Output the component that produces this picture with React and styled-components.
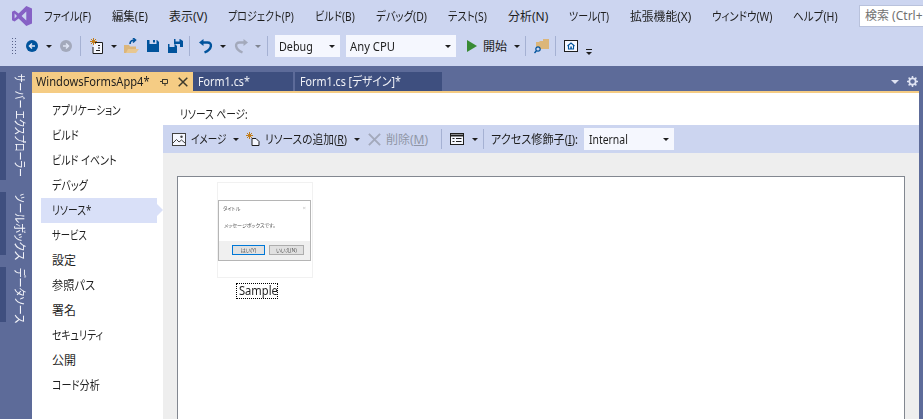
import React, { useLayoutEffect, useRef } from 'react';
import styled, { createGlobalStyle, css } from 'styled-components';

const GlobalStyle = createGlobalStyle`
    html, body {
        margin: 0;
        padding: 0;
        background: #5d6b99;
    }
    * {
        box-sizing: border-box;
    }
`;

const gapLeft = css`
    margin-left: ${(p) => p.$ml || 0}px;
    flex-shrink: 0;
`;

const Window = styled.div`
    width: 923px;
    height: 419px;
    overflow: hidden;
    display: flex;
    flex-direction: column;
    background: #5d6b99;
    color: #1e1e1e;
    font-family: 'Noto Sans', 'Noto Sans CJK JP', sans-serif;
    font-size: 12px;
    font-feature-settings: 'palt';
`;

const FitBox = styled.span`
    ${gapLeft};
    display: inline-block;
    ${(p) => (p.$vertical ? `height: ${p.$w}px;` : `width: ${p.$w}px;`)}
    white-space: nowrap;
    color: ${(p) => (p.$muted ? '#8f95a6' : 'inherit')};
`;

const FitInner = styled.span`
    display: inline-block;
    transform-origin: 0 0;
    u {
        text-underline-offset: 1px;
    }
`;

// Meiryo UI is narrower than the installed fonts, so each label is squeezed to its measured width
const Fit = ({ w, vertical, ml, muted, children }) => {
    const ref = useRef(null);
    useLayoutEffect(() => {
        const el = ref.current;
        if (vertical) {
            el.style.transform = `scaleY(${w / el.offsetHeight})`;
        } else {
            el.style.transform = `scaleX(${w / el.offsetWidth})`;
        }
    }, [w, vertical]);
    return (
        <FitBox $w={w} $vertical={vertical} $ml={ml} $muted={muted}>
            <FitInner ref={ref}>{children}</FitInner>
        </FitBox>
    );
};

const Header = styled.div`
    height: 66px;
    background: #ccd5f0;
    flex-shrink: 0;
`;

const MenuBar = styled.div`
    height: 32px;
    display: flex;
    align-items: center;
    padding-left: 12px;
    overflow: hidden;
`;

const SearchBox = styled.div`
    margin-left: 21px;
    width: 120px;
    height: 22px;
    flex-shrink: 0;
    background: #fff;
    border: 1px solid #b9c2dc;
    color: #717171;
    padding-left: 5px;
    line-height: 19px;
    white-space: nowrap;
`;

const ToolBar = styled.div`
    height: 28px;
    display: flex;
    align-items: center;
    padding-left: 12px;
`;

const Grip = styled.div`
    ${gapLeft};
    width: 5px;
    height: 17px;
    background-image: radial-gradient(circle at 0.5px 0.5px, #59638a 0.7px, transparent 0.8px);
    background-size: 3px 3px;
`;

const Caret = styled.span`
    ${gapLeft};
    width: 0;
    height: 0;
    border-left: 3px solid transparent;
    border-right: 3px solid transparent;
    border-top: 3px solid ${(p) => (p.$muted ? '#7f8490' : '#1e1e1e')};
`;

const Sep = styled.span`
    ${gapLeft};
    width: 1px;
    height: 20px;
    background: #a5b1d3;
`;

const Combo = styled.div`
    ${gapLeft};
    width: ${(p) => p.$w}px;
    height: 22px;
    background: #f5f7fe;
    padding: 0 5px 0 ${(p) => p.$pad || 4}px;
    display: flex;
    align-items: center;
    justify-content: space-between;
`;

const IconSvg = styled.svg`
    ${gapLeft};
    display: block;
`;

const Overflow = styled.span`
    ${gapLeft};
    width: 6px;
    height: 6px;
    margin-top: 11px;
    border-top: 1px solid #1e1e1e;
    position: relative;
    &::after {
        content: '';
        position: absolute;
        left: 0;
        top: 2px;
        border-left: 3px solid transparent;
        border-right: 3px solid transparent;
        border-top: 3px solid #1e1e1e;
    }
`;

const Body = styled.div`
    flex: 1;
    min-height: 0;
    display: flex;
`;

const Rail = styled.div`
    width: 32px;
    flex-shrink: 0;
    padding-top: 6px;
    display: flex;
    flex-direction: column;
`;

const RailTab = styled.div`
    height: ${(p) => p.$h}px;
    margin-bottom: ${(p) => p.$mb || 0}px;
    border-left: 6px solid #3f4f7f;
    width: 32px;
    color: #f4f5fa;
    writing-mode: vertical-rl;
    text-orientation: sideways;
    white-space: nowrap;
    display: flex;
    justify-content: flex-start;
    align-items: center;
    padding-top: ${(p) => p.$pt || 1}px;
    line-height: 26px;
`;

const Main = styled.div`
    flex: 1;
    min-width: 0;
    padding-right: 4px;
    display: flex;
    flex-direction: column;
`;

const TabStrip = styled.div`
    height: 25px;
    flex-shrink: 0;
    padding-top: 6px;
    display: flex;
    align-items: stretch;
`;

const DocTab = styled.div`
    width: ${(p) => p.$w}px;
    margin-right: ${(p) => p.$mr || 0}px;
    padding-left: ${(p) => p.$pad || 4}px;
    background: ${(p) => (p.$active ? '#f5cc84' : '#3e4f7f')};
    color: ${(p) => (p.$active ? '#1e1e1e' : '#f2f3f8')};
    display: flex;
    align-items: center;
    white-space: nowrap;
    line-height: 19px;
`;

const StripTools = styled.div`
    margin-left: auto;
    padding-right: 1px;
    display: flex;
    align-items: center;
`;

const StripCaret = styled.span`
    width: 0;
    height: 0;
    border-left: 4px solid transparent;
    border-right: 4px solid transparent;
    border-top: 4px solid #dfe3f2;
    margin-right: 8px;
`;

const GoldLine = styled.div`
    height: 2px;
    background: #f5cc84;
    flex-shrink: 0;
`;

const Content = styled.div`
    flex: 1;
    min-height: 0;
    display: flex;
    background: #fff;
`;

const Nav = styled.div`
    width: 131px;
    flex-shrink: 0;
    padding: 5px 0 0 9px;
`;

const NavItem = styled.div`
    position: relative;
    width: 116px;
    height: 25px;
    line-height: 25px;
    padding-left: 11px;
    color: #1e1e1e;
    background: ${(p) => (p.$active ? '#d9e0f8' : 'transparent')};
    ${(p) =>
        p.$active &&
        css`
            &::after {
                content: '';
                position: absolute;
                right: -6px;
                top: 6px;
                border-top: 6.5px solid transparent;
                border-bottom: 6.5px solid transparent;
                border-left: 6px solid #d9e0f8;
            }
        `}
`;

const Panel = styled.div`
    flex: 1;
    min-width: 0;
    display: flex;
    flex-direction: column;
`;

const PanelTitle = styled.div`
    height: 32px;
    flex-shrink: 0;
    padding: 13px 0 0 17px;
    line-height: 18px;
`;

const ResourceBar = styled.div`
    height: 28px;
    flex-shrink: 0;
    background: #ccd5f0;
    display: flex;
    align-items: center;
    padding-left: 9px;
`;

const CanvasArea = styled.div`
    flex: 1;
    min-height: 0;
    background: #eeeeee;
    padding: 23px 14px 0;
    display: flex;
`;

const Canvas = styled.div`
    flex: 1;
    background: #fff;
    border: 1px solid #828790;
    border-bottom: 0;
    padding: 5px 0 0 39px;
`;

const Resource = styled.div`
    width: 96px;
    display: flex;
    flex-direction: column;
    align-items: flex-start;
`;

const Thumb = styled.div`
    width: 96px;
    height: 96px;
    border: 1px solid #f1f1f1;
    display: flex;
    align-items: center;
    justify-content: center;
`;

const MiniDialog = styled.div`
    width: 93px;
    height: 61px;
    margin-left: -1px;
    background: #fff;
    border: 1px solid #b5b5b5;
    display: flex;
    flex-direction: column;
    font-size: 5px;
    color: #555;
    filter: blur(0.3px);
`;

const MiniTitle = styled.div`
    height: 14px;
    padding: 0 4px;
    display: flex;
    align-items: center;
    justify-content: space-between;
`;

const MiniClose = styled.span`
    color: #c4c4c4;
    font-size: 6px;
`;

const MiniMessage = styled.div`
    flex: 1;
    padding: 6px 0 0 5px;
`;

const MiniFooter = styled.div`
    height: 19px;
    background: #f0f0f0;
    display: flex;
    align-items: center;
    justify-content: flex-end;
    gap: 4px;
    padding-right: 6px;
`;

const MiniButton = styled.div`
    width: ${(p) => p.$w}px;
    height: 10px;
    line-height: 8px;
    text-align: center;
    background: #e1e1e1;
    border: 1px solid ${(p) => (p.$primary ? '#0078d7' : '#adadad')};
`;

const ResourceLabel = styled.div`
    margin-top: 5px;
    margin-left: 19px;
    height: 16px;
    width: 42px;
    padding-left: 2px;
    line-height: 14px;
    border: 1px dotted #000;
    color: #1e1e1e;
`;

const VsLogo = () => (
    <IconSvg width="20" height="20" viewBox="0 0 20 20">
        <path
            fill="#8661c5"
            fillRule="evenodd"
            d="M14.3 0 20 2.4v15.2L14.3 20 6.6 12.6 2.6 15.6 0 14.3V5.7l2.6-1.3 4 3zM14.3 5.6 9.6 10l4.7 4.4zM2.6 7.6v4.8L5 10z"
        />
    </IconSvg>
);

const CircleArrow = ({ color, flip, ml }) => (
    <IconSvg $ml={ml} width="12" height="12" viewBox="0 0 12 12">
        <circle cx="6" cy="6" r="6" fill={color} />
        <path
            d={flip ? 'M3 6h5M6 3.5 8.5 6 6 8.5' : 'M9 6H4M6 3.5 3.5 6 6 8.5'}
            fill="none"
            stroke="#dfe5f5"
            strokeWidth="1.5"
        />
    </IconSvg>
);

const NewProjectIcon = ({ ml }) => (
    <IconSvg $ml={ml} width="14" height="16" viewBox="0 0 14 16">
        <path d="M5 4.5h7.5v11H3V9" fill="#f5f7fe" stroke="#1e1e1e" />
        <path d="M8 7.5h2M8 10h2M6 12.5h4" stroke="#1e1e1e" />
        <path d="M3.5 0v7M0 3.5h7M1 1l5 5M6 1 1 6" stroke="#c27d1a" />
    </IconSvg>
);

const OpenFolderIcon = ({ ml }) => (
    <IconSvg $ml={ml} width="15" height="16" viewBox="0 0 15 16">
        <path d="M0 7h5l1 1.5h6V15H0z" fill="#dcb67a" />
        <path d="M2 15l2-4h11l-3 4z" fill="#e8c791" />
        <path d="M6 6c0-3 2-4 5-4M9 0l2.5 2L9 4.5" fill="none" stroke="#00539c" strokeWidth="1.6" />
    </IconSvg>
);

const SaveIcon = ({ ml }) => (
    <IconSvg $ml={ml} width="12" height="12" viewBox="0 0 12 12">
        <path fill="#00539c" d="M0 0h2.5v4h7V0h.5L12 2v10H0zM6 0h2v2.5H6z" />
    </IconSvg>
);

const SaveAllIcon = ({ ml }) => (
    <IconSvg $ml={ml} width="15" height="14" viewBox="0 0 15 14">
        <path fill="#00539c" d="M6 0h1.5v2.5h4V0h.5L15 2v6h-3V5H6z" />
        <path fill="#00539c" d="M0 5h1.5v3h5V5h.5L9 7v7H0z" />
    </IconSvg>
);

const UndoIcon = ({ color, flip, ml }) => (
    <IconSvg $ml={ml} width="14" height="15" viewBox="0 0 14 15">
        <g transform={flip ? 'matrix(-1 0 0 1 14 0)' : undefined}>
            <path d="M3 3.5h5.5c5 0 5 6.5-3 10" fill="none" stroke={color} strokeWidth="2.4" />
            <path d="M0 3.5 4.5 0v7z" fill={color} />
        </g>
    </IconSvg>
);

const PlayIcon = ({ ml }) => (
    <IconSvg $ml={ml} width="10" height="12" viewBox="0 0 10 12">
        <path d="M0 0l10 6-10 6z" fill="#388a34" />
    </IconSvg>
);

const FindFilesIcon = ({ ml }) => (
    <IconSvg $ml={ml} width="15" height="15" viewBox="0 0 15 15">
        <path d="M2 3h3l1-1h3V0h6v10H5V9H2z" fill="#dcb67a" />
        <circle cx="4" cy="10" r="2.2" fill="#ccd5f0" stroke="#00539c" strokeWidth="1.2" />
        <path d="M2.4 11.8 0.5 14" stroke="#00539c" strokeWidth="1.4" />
    </IconSvg>
);

const HomeIcon = ({ ml }) => (
    <IconSvg $ml={ml} width="14" height="12" viewBox="0 0 14 12">
        <rect x=".5" y=".5" width="13" height="11" fill="#f5f7fe" stroke="#1e1e1e" />
        <path d="M3.5 6 7 3l3.5 3M4.5 5.5V9h5V5.5" fill="none" stroke="#00539c" strokeWidth="1.1" />
        <path d="M6.3 6.5h1.5V9H6.3z" fill="#00539c" />
    </IconSvg>
);

const GearIcon = () => (
    <svg width="11" height="11" viewBox="0 0 11 11">
        <circle cx="5.5" cy="5.5" r="3.2" fill="none" stroke="#dfe3f2" strokeWidth="1.8" />
        <path
            d="M5.5 0v2M5.5 9v2M0 5.5h2M9 5.5h2M1.6 1.6 3 3M8 8l1.4 1.4M1.6 9.4 3 8M8 3l1.4-1.4"
            stroke="#dfe3f2"
            strokeWidth="1.5"
        />
    </svg>
);

const PinIcon = () => (
    <IconSvg $ml={10} width="8" height="8" viewBox="0 0 8 8">
        <path d="M2.5 1.5h5v4h-5zM0 3.5h2.5M2.5 1v5M5 5.5V8" fill="none" stroke="#3e3a2c" />
    </IconSvg>
);

const CloseIcon = ({ color, size, ml }) => (
    <IconSvg $ml={ml} width={size} height={size} viewBox="0 0 10 10">
        <path d="M.7.7l8.6 8.6M9.3.7.7 9.3" stroke={color} strokeWidth="1.5" />
    </IconSvg>
);

const ImageIcon = () => (
    <IconSvg width="14" height="13" viewBox="0 0 14 13">
        <rect x=".5" y=".5" width="13" height="12" fill="#f5f7fe" stroke="#424242" />
        <path d="M1 10l3.5-3.5L7 9l2.5-2 3.5 3" fill="none" stroke="#424242" />
        <circle cx="9.5" cy="3.8" r="1.2" fill="#424242" />
    </IconSvg>
);

const AddResourceIcon = ({ ml }) => (
    <IconSvg $ml={ml} width="14" height="14" viewBox="0 0 14 14">
        <path d="M6 6.5h4l3 3v4H6z" fill="#f5f7fe" stroke="#1e1e1e" />
        <path d="M3.5 0v7M0 3.5h7M1 1l5 5M6 1 1 6" stroke="#c27d1a" />
    </IconSvg>
);

const ViewIcon = ({ ml }) => (
    <IconSvg $ml={ml} width="14" height="12" viewBox="0 0 14 12">
        <rect x=".5" y=".5" width="13" height="11" fill="#f5f7fe" stroke="#1e1e1e" />
        <path d="M0 2.5h14" stroke="#1e1e1e" strokeWidth="2" />
        <path d="M2.5 5.5h2M2.5 8.5h2M6 5.5h5.5M6 8.5h5.5" stroke="#1e1e1e" />
    </IconSvg>
);

const MENU = [
    ['ファイル(F)', 47],
    ['編集(E)', 36],
    ['表示(V)', 38],
    ['プロジェクト(P)', 66],
    ['ビルド(B)', 40],
    ['デバッグ(D)', 51],
    ['テスト(S)', 39],
    ['分析(N)', 40],
    ['ツール(T)', 40],
    ['拡張機能(X)', 61],
    ['ウィンドウ(W)', 60],
    ['ヘルプ(H)', 45],
];

const NAV = [
    ['アプリケーション', 69],
    ['ビルド', 27],
    ['ビルド イベント', 65],
    ['デバッグ', 36],
    ['リソース*', 39],
    ['サービス', 35],
    ['設定', 24],
    ['参照パス', 43],
    ['署名', 24],
    ['セキュリティ', 51],
    ['公開', 24],
    ['コード分析', 48],
];

const App = () => (
    <Window>
        <GlobalStyle />
        <Header>
            <MenuBar>
                <VsLogo />
                {MENU.map(([label, w], i) => (
                    <Fit key={label} w={w} ml={i === 0 ? 12 : 21}>
                        {label}
                    </Fit>
                ))}
                <SearchBox>検索 (Ctrl+</SearchBox>
            </MenuBar>
            <ToolBar>
                <Grip />
                <CircleArrow color="#00539c" ml={9} />
                <Caret $ml={8} />
                <CircleArrow color="#a3a9bb" flip ml={8} />
                <Sep $ml={8} />
                <NewProjectIcon ml={9} />
                <Caret $ml={7} />
                <OpenFolderIcon ml={7} />
                <SaveIcon ml={8} />
                <SaveAllIcon ml={9} />
                <Sep $ml={6} />
                <UndoIcon color="#00539c" ml={9} />
                <Caret $ml={7} />
                <UndoIcon color="#a3a9bb" flip ml={8} />
                <Caret $ml={7} $muted />
                <Sep $ml={6} />
                <Combo $ml={7} $w={65}>
                    <Fit w={34}>Debug</Fit>
                    <Caret />
                </Combo>
                <Combo $ml={6} $w={110}>
                    <Fit w={45}>Any CPU</Fit>
                    <Caret />
                </Combo>
                <PlayIcon ml={11} />
                <Fit w={24} ml={6}>開始</Fit>
                <Caret $ml={7} />
                <Sep $ml={5} />
                <FindFilesIcon ml={8} />
                <Sep $ml={6} />
                <HomeIcon ml={8} />
                <Overflow $ml={8} />
            </ToolBar>
        </Header>
        <Body>
            <Rail>
                <RailTab $h={108} $mb={12} $pt={2}>
                    <Fit w={103} vertical>サーバー エクスプローラー</Fit>
                </RailTab>
                <RailTab $h={63} $mb={12}>
                    <Fit w={67} vertical>ツールボックス</Fit>
                </RailTab>
                <RailTab $h={55}>
                    <Fit w={55} vertical>データソース</Fit>
                </RailTab>
            </Rail>
            <Main>
                <TabStrip>
                    <DocTab $active $w={161}>
                        <Fit w={114}>WindowsFormsApp4*</Fit>
                        <PinIcon />
                        <CloseIcon color="#3e3a2c" size={10} ml={10} />
                    </DocTab>
                    <DocTab $w={100} $mr={2} $pad={5}>
                        <Fit w={52}>Form1.cs*</Fit>
                    </DocTab>
                    <DocTab $w={147} $pad={5}>
                        <Fit w={101}>Form1.cs [デザイン]*</Fit>
                    </DocTab>
                    <StripTools>
                        <StripCaret />
                        <GearIcon />
                    </StripTools>
                </TabStrip>
                <GoldLine />
                <Content>
                    <Nav>
                        {NAV.map(([label, w]) => (
                            <NavItem key={label} $active={label === 'リソース*'}>
                                <Fit w={w}>{label}</Fit>
                            </NavItem>
                        ))}
                    </Nav>
                    <Panel>
                        <PanelTitle>
                            <Fit w={68}>リソース ページ:</Fit>
                        </PanelTitle>
                        <ResourceBar>
                            <ImageIcon />
                            <Fit w={35} ml={5}>イメージ</Fit>
                            <Caret $ml={7} />
                            <AddResourceIcon ml={7} />
                            <Fit w={82} ml={5}>
                                リソースの追加(<u>R</u>)
                            </Fit>
                            <Caret $ml={7} />
                            <CloseIcon color="#a3a9bb" size={13} ml={8} />
                            <Fit w={42} ml={5} muted>
                                削除(<u>M</u>)
                            </Fit>
                            <Sep $ml={13} />
                            <ViewIcon ml={8} />
                            <Caret $ml={8} />
                            <Sep $ml={5} />
                            <Fit w={87} ml={7}>
                                アクセス修飾子(<u>I</u>):
                            </Fit>
                            <Combo $ml={6} $w={90} $pad={5}>
                                <Fit w={39}>Internal</Fit>
                                <Caret />
                            </Combo>
                        </ResourceBar>
                        <CanvasArea>
                            <Canvas>
                                <Resource>
                                    <Thumb>
                                        <MiniDialog>
                                            <MiniTitle>
                                                タイトル
                                                <MiniClose>×</MiniClose>
                                            </MiniTitle>
                                            <MiniMessage>メッセージボックスです。</MiniMessage>
                                            <MiniFooter>
                                                <MiniButton $primary $w={33}>はい(Y)</MiniButton>
                                                <MiniButton $w={35}>いいえ(N)</MiniButton>
                                            </MiniFooter>
                                        </MiniDialog>
                                    </Thumb>
                                    <ResourceLabel>
                                        <Fit w={39}>Sample</Fit>
                                    </ResourceLabel>
                                </Resource>
                            </Canvas>
                        </CanvasArea>
                    </Panel>
                </Content>
            </Main>
        </Body>
    </Window>
);

export default App;
